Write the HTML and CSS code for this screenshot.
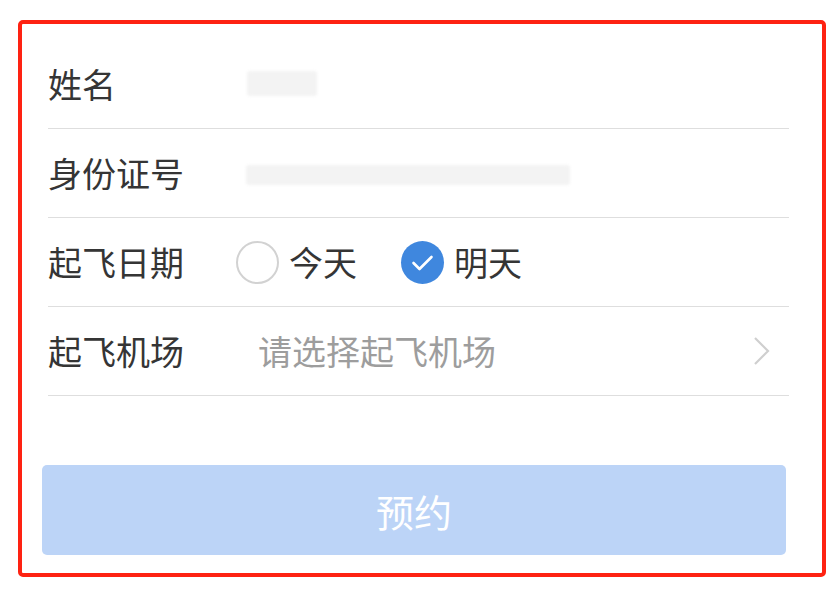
FILE: index.html
```html
<!DOCTYPE html>
<html lang="zh-CN">
<head>
<meta charset="utf-8">
<title>预约</title>
<link rel="stylesheet" href="styles.css">
</head>
<body>
<div class="card">
  <div class="rows">
    <div class="row">
      <div class="label">姓名</div>
      <div class="value"><span class="blur blur-name"></span></div>
    </div>
    <div class="row">
      <div class="label">身份证号</div>
      <div class="value"><span class="blur blur-id"></span></div>
    </div>
    <div class="row">
      <div class="label">起飞日期</div>
      <div class="value radios">
        <div class="radio">
          <span class="circle"></span>
          <span class="radio-text">今天</span>
        </div>
        <div class="radio">
          <span class="circle checked">
            <svg width="43" height="43" viewBox="0 0 43 43"><polyline points="12.5,22 18.5,28 30.5,16" fill="none" stroke="#fff" stroke-width="2.6" stroke-linecap="round" stroke-linejoin="round"/></svg>
          </span>
          <span class="radio-text">明天</span>
        </div>
      </div>
    </div>
    <div class="row">
      <div class="label">起飞机场</div>
      <div class="value select">
        <span class="placeholder">请选择起飞机场</span>
        <svg class="chevron" width="20" height="30" viewBox="0 0 20 30"><polyline points="3,2 16,15 3,28" fill="none" stroke="#cfcfcf" stroke-width="2.2" stroke-linejoin="miter"/></svg>
      </div>
    </div>
  </div>
  <button class="submit" type="button">预约</button>
</div>
</body>
</html>
```

FILE: styles.css
```css
html, body {
  margin: 0;
  padding: 0;
  background: #ffffff;
}

body {
  font-family: "Noto Sans CJK SC", "Noto Sans", sans-serif;
  color: #333333;
}

.card {
  box-sizing: border-box;
  width: 808px;
  height: 557px;
  margin: 20px 0 0 18px;
  border: 4px solid #fe2212;
  border-radius: 5px;
  padding: 16px 36px 0 20px;
  display: flex;
  flex-direction: column;
}

.rows {
  margin: 0 -3px 0 6px;
  display: flex;
  flex-direction: column;
}

.row {
  height: 88px;
  border-bottom: 1px solid #dedede;
  display: flex;
  align-items: center;
}

.label {
  width: 188px;
  flex-shrink: 0;
  font-size: 34px;
  line-height: 1;
  color: #353535;
}

.value {
  flex: 1;
  display: flex;
  align-items: center;
  height: 100%;
}

.blur {
  display: block;
  background: #f3f3f3;
  border-radius: 3px;
  filter: blur(1.5px);
}

.blur-name {
  width: 70px;
  height: 25px;
  margin: 0 0 2px 11px;
}

.blur-id {
  width: 324px;
  height: 20px;
  margin: 4px 0 0 10px;
}

.radios {
  gap: 44px;
}

.radio {
  display: flex;
  align-items: center;
  gap: 10px;
}

.circle {
  box-sizing: border-box;
  width: 43px;
  height: 43px;
  border-radius: 50%;
  border: 2px solid #d2d2d2;
  display: flex;
  align-items: center;
  justify-content: center;
}

.circle.checked {
  border: none;
  background: #3f87de;
}

.radio-text {
  font-size: 34px;
  line-height: 1;
  color: #353535;
}

.select {
  justify-content: space-between;
  padding: 0 17px 0 22px;
}

.placeholder {
  font-size: 34px;
  line-height: 1;
  color: #9d9d9d;
}

.chevron {
  display: block;
}

.submit {
  margin-top: 69px;
  height: 90px;
  width: 100%;
  border: none;
  border-radius: 5px;
  background: #bcd4f7;
  color: #ffffff;
  font-family: "Noto Sans CJK SC", "Noto Sans", sans-serif;
  font-size: 38px;
  padding: 0;
  display: flex;
  align-items: center;
  justify-content: center;
}
```
